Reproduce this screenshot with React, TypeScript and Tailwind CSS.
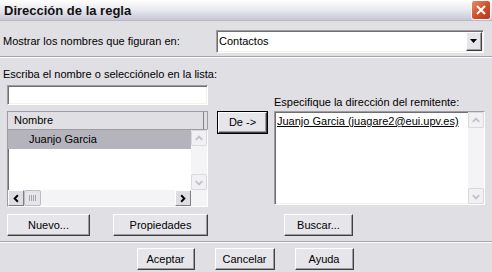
import React from 'react';

// Classic XP-style dialog: "Dirección de la regla"

const raised =
  'border border-t-white border-l-white border-b-[#404040] border-r-[#404040] shadow-[inset_-1px_-1px_0_#9d9da1] bg-[#e6e5ea]';
const sunken =
  'border border-t-[#9d9da1] border-l-[#9d9da1] border-b-white border-r-white shadow-[inset_1px_1px_0_#6f6f73,inset_-1px_-1px_0_#f3f2ea]';

function Button({ label, className = '', isDefault = false }: { label: string; className?: string; isDefault?: boolean }) {
  if (isDefault) {
    return (
      <div className={`border border-black ${className}`}>
        <div className={`${raised} h-full flex items-center justify-center`}>{label}</div>
      </div>
    );
  }
  return <div className={`${raised} flex items-center justify-center ${className}`}>{label}</div>;
}

function ScrollArrow({ dir, disabled = false }: { dir: 'up' | 'down' | 'left' | 'right'; disabled?: boolean }) {
  const stroke = disabled ? '#c3c2c8' : '#000';
  const paths: Record<string, string> = {
    up: 'M4 9 L7.5 5.5 L11 9',
    down: 'M4 6 L7.5 9.5 L11 6',
    left: 'M9.5 4 L6 7.5 L9.5 11',
    right: 'M5.5 4 L9 7.5 L5.5 11',
  };
  return (
    <div
      className={`w-[16px] h-[16px] flex items-center justify-center ${
        disabled
          ? 'bg-[#f1f1f3] border border-[#d9d8de] rounded-[2px]'
          : 'bg-[#dedde3] border border-t-white border-l-white border-b-[#7f7f85] border-r-[#7f7f85]'
      }`}
    >
      <svg width="15" height="15" viewBox="0 0 15 15">
        <path d={paths[dir]} fill="none" stroke={stroke} strokeWidth="2" />
      </svg>
    </div>
  );
}

function VScroll() {
  return (
    <div className="w-[16px] h-full bg-[#f4f4f7] flex flex-col justify-between">
      <ScrollArrow dir="up" disabled />
      <ScrollArrow dir="down" disabled />
    </div>
  );
}

export default function App() {
  return (
    <div className="w-[492px] h-[272px] bg-[#e0dfe3] flex flex-col overflow-hidden text-[11px] text-black font-['Liberation_Sans',Arial,sans-serif] leading-none">
      {/* Title bar */}
      <div className="h-[21px] flex items-center justify-between pl-[4px] bg-gradient-to-b from-white via-[#e8e8ef] to-[#c8c7d5] border-b border-[#b8b7c6]">
        <span className="text-[13px] font-bold text-[#111]">Dirección de la regla</span>
        <div className="w-[20px] h-[20px] mr-[1px] rounded-[3px] border border-white bg-gradient-to-br from-[#e88a6e] via-[#d2512c] to-[#b2361a] flex items-center justify-center">
          <svg width="12" height="12" viewBox="0 0 12 12">
            <path d="M2 2 L10 10 M10 2 L2 10" stroke="white" strokeWidth="2" />
          </svg>
        </div>
      </div>

      {/* Address book selector */}
      <div className="flex items-center mt-[9px] pl-[3px] pr-[8px]">
        <span className="w-[213px]">Mostrar los nombres que figuran en:</span>
        <div className={`${sunken} flex-1 h-[23px] bg-white flex items-center justify-between pl-[2px] pr-[1px]`}>
          <span>Contactos</span>
          <div className={`${raised} w-[16px] h-[19px] flex items-center justify-center`}>
            <svg width="8" height="5" viewBox="0 0 8 5">
              <path d="M0 0 H7 L3.5 4 Z" fill="#000" />
            </svg>
          </div>
        </div>
      </div>

      <div className="mt-[3px] h-[2px] border-t border-[#a5a4ad] border-b border-b-white" />

      <div className="pl-[3px] mt-[10px] h-[12px] flex items-center">Escriba el nombre o selecciónelo en la lista:</div>

      {/* Main area */}
      <div className="flex mt-[5px] pl-[7px]">
        {/* Left column */}
        <div className="w-[201px] flex flex-col">
          <div className={`${sunken} h-[20px] bg-white`} />
          <div className="mt-[6px] h-[18px] flex items-stretch bg-[#e0dfe3] border border-t-[#9d9da1] border-l-[#9d9da1] border-b-0 border-r-[#9d9da1]">
            <div className="flex-1 flex items-center pl-[6px] border-r border-r-[#828187]">Nombre</div>
            <div className="w-[3px]" />
          </div>
          <div className={`${sunken} h-[78px] bg-white flex flex-col`}>
            <div className="flex flex-1 min-h-0">
              <div className="flex-1">
                <div className="h-[19px] bg-[#b5b4bd] flex items-center pl-[21px]">Juanjo Garcia</div>
              </div>
              <VScroll />
            </div>
            <div className="h-[16px] flex bg-[#f4f4f7]">
              <ScrollArrow dir="left" />
              <div className="w-[17px] h-[16px] bg-[#e6e5ea] border border-[#bdbcc4] rounded-[2px] flex items-center justify-center">
                <svg width="8" height="6" viewBox="0 0 8 6">
                  <path d="M0.5 0 V6 M2.5 0 V6 M4.5 0 V6 M6.5 0 V6" stroke="#a6a5ad" strokeWidth="1" />
                </svg>
              </div>
              <div className="flex-1" />
              <ScrollArrow dir="right" />
              <div className="w-[16px]" />
            </div>
          </div>
          <div className="flex justify-between mt-[7px]">
            <Button label="Nuevo..." className="w-[83px] h-[22px]" />
            <Button label="Propiedades" className="w-[95px] h-[22px]" />
          </div>
        </div>

        {/* De -> */}
        <div className="ml-[9px] pt-[26px]">
          <Button label="De ->" isDefault className="w-[51px] h-[23px]" />
        </div>

        {/* Right column */}
        <div className="ml-[6px] w-[211px] flex flex-col">
          <div className="h-[26px] flex items-end pb-[3px]">Especifique la dirección del remitente:</div>
          <div className={`${sunken} h-[94px] bg-white flex`}>
            <div className="flex-1 pl-[2px] pt-[4px]">
              <span className="underline">Juanjo Garcia (juagare2@eui.upv.es)</span>
            </div>
            <VScroll />
          </div>
          <div className="mt-[9px] pl-[10px]">
            <Button label="Buscar..." className="w-[69px] h-[22px]" />
          </div>
        </div>
      </div>

      <div className="mt-[5px] h-[2px] border-t border-[#a5a4ad] border-b border-b-white" />

      {/* Footer buttons */}
      <div className="flex justify-center gap-[20px] mt-[5px] pr-[2px]">
        <Button label="Aceptar" className="w-[58px] h-[22px]" />
        <Button label="Cancelar" className="w-[60px] h-[22px]" />
        <Button label="Ayuda" className="w-[59px] h-[22px]" />
      </div>
    </div>
  );
}
